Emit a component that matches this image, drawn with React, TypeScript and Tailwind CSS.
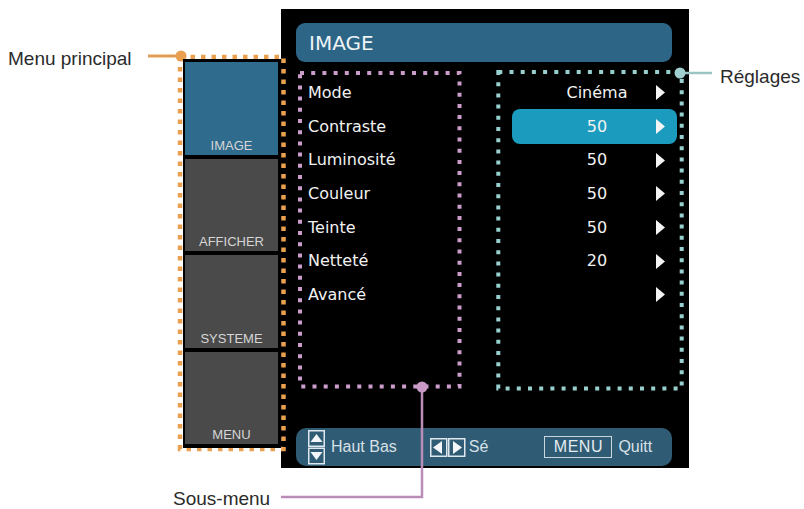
import React from 'react'

const rows = [
  { label: 'Mode', value: 'Cinéma' },
  { label: 'Contraste', value: '50', active: true },
  { label: 'Luminosité', value: '50' },
  { label: 'Couleur', value: '50' },
  { label: 'Teinte', value: '50' },
  { label: 'Netteté', value: '20' },
  { label: 'Avancé', value: '' },
]

const tiles = [
  { label: 'IMAGE', active: true },
  { label: 'AFFICHER' },
  { label: 'SYSTEME' },
  { label: 'MENU' },
]

const Arrow = () => (
  <svg width="9" height="15" viewBox="0 0 9 15" className="shrink-0">
    <polygon points="0,0 9,7.5 0,15" fill="#f4f4f4" />
  </svg>
)

const UpDownIcon = () => (
  <svg width="17" height="35" viewBox="0 0 17 35" className="shrink-0">
    <rect x="0.75" y="0.75" width="15.5" height="15.5" fill="none" stroke="#dfe8ee" strokeWidth="1.5" />
    <polygon points="2.5,12 14.5,12 8.5,4" fill="#f2f6f8" />
    <rect x="0.75" y="18.25" width="15.5" height="15.5" fill="none" stroke="#dfe8ee" strokeWidth="1.5" />
    <polygon points="2.5,22 14.5,22 8.5,30" fill="#f2f6f8" />
  </svg>
)

const LeftRightIcon = () => (
  <svg width="36" height="19" viewBox="0 0 36 19" className="shrink-0">
    <rect x="0.75" y="0.75" width="16" height="17.5" fill="none" stroke="#dfe8ee" strokeWidth="1.5" />
    <polygon points="3,9.5 12,3 12,16" fill="#f2f6f8" />
    <rect x="18.75" y="0.75" width="16" height="17.5" fill="none" stroke="#dfe8ee" strokeWidth="1.5" />
    <polygon points="32,9.5 23,3 23,16" fill="#f2f6f8" />
  </svg>
)

const Callouts = () => (
  <svg className="absolute inset-0 pointer-events-none" width="804" height="509" viewBox="0 0 804 509">
    {/* menu principal */}
    <rect x="180" y="57" width="103.5" height="392" fill="none" stroke="#eba04f" strokeWidth="4.5" strokeDasharray="4.5 6" />
    <line x1="148" y1="56" x2="181" y2="56" stroke="#df9d57" strokeWidth="3" />
    <circle cx="181" cy="56" r="5.5" fill="#e89f4f" />

    {/* sous-menu */}
    <rect x="300" y="73" width="159.5" height="313.5" fill="none" stroke="#cc9ccb" strokeWidth="4" strokeDasharray="4 7.2" />
    <polyline points="422,387 422,497 281,497" fill="none" stroke="#b98db7" strokeWidth="2.5" />
    <circle cx="422" cy="387" r="5.5" fill="#c99ac6" />

    {/* réglages */}
    <rect x="498.3" y="72" width="183.4" height="316.5" fill="none" stroke="#98cfcf" strokeWidth="4" strokeDasharray="4 7.2" />
    <line x1="680" y1="73" x2="712" y2="73" stroke="#9cc4c5" strokeWidth="2.5" />
    <circle cx="680" cy="73" r="5.5" fill="#a0d0d0" />
  </svg>
)

export default function App() {
  return (
    <div className="relative w-[804px] h-[509px] bg-white overflow-hidden font-['Liberation_Sans',Arial,sans-serif]">
      <div className="flex items-start pl-[183px] pt-[9px]">
        {/* main menu column */}
        <aside className="relative z-10 mt-[50px] w-[98px] h-[389px] bg-black pl-[2px] pr-[3px] pt-[3px] flex flex-col gap-[4px]">
          {tiles.map((t) => (
            <div
              key={t.label}
              className={`h-[92.5px] flex items-end justify-center pb-[3px] text-[13px] leading-none text-[#d6d6d6] ${
                t.active ? 'bg-[#2f6b8d]' : 'bg-[#4a4a4a]'
              }`}
            >
              {t.label}
            </div>
          ))}
        </aside>

        {/* OSD panel */}
        <div className="w-[408px] h-[459px] bg-black pl-[15px] pt-[14px] font-['DejaVu_Sans',Verdana,sans-serif]">
          <div className="w-[376px] h-[39px] rounded-[9px] bg-[#2c6586] flex items-center pl-[13px] text-[20px] text-[#eef3f6]">
            IMAGE
          </div>

          <div className="flex mt-[8px]">
            <div className="ml-[2px] w-[164px] h-[320px] pt-[6px] pl-[10px]">
              {rows.map((r) => (
                <div key={r.label} className="h-[33.7px] flex items-center text-[16px] text-[#f2f2f2]">
                  {r.label}
                </div>
              ))}
            </div>

            <div className="ml-[34px] w-[188px] h-[320px] pt-[6px]">
              {rows.map((r) => (
                <div key={r.label} className="h-[33.7px] flex items-center">
                  <div
                    className={`ml-[16px] w-[165px] flex items-center ${
                      r.active ? 'h-[35px] rounded-[8px] bg-[#1b9cbf]' : 'h-full'
                    }`}
                  >
                    <span className="ml-[37px] w-[96px] text-center text-[16px] text-[#f2f2f2]">{r.value}</span>
                    <span className="ml-[11px] flex">
                      <Arrow />
                    </span>
                  </div>
                </div>
              ))}
            </div>
          </div>

          <div className="mt-[38px] w-[376px] h-[38px] rounded-[10px] bg-[#2f5b74] flex items-center text-[16px] text-[#d7e1e7] font-['Liberation_Sans',Arial,sans-serif]">
            <span className="ml-[12px] flex">
              <UpDownIcon />
            </span>
            <span className="ml-[6px]">Haut Bas</span>
            <span className="ml-[33px] flex">
              <LeftRightIcon />
            </span>
            <span className="ml-[3px]">Sé</span>
            <span className="ml-[56px] w-[68px] h-[22px] border-[1.5px] border-[#c9d6de] flex items-center justify-center tracking-[0.5px] text-[#e4ecf0]">
              MENU
            </span>
            <span className="ml-[6px]">Quitt</span>
          </div>
        </div>
      </div>

      <Callouts />

      <span className="absolute left-[8px] top-[45px] text-[19px] text-[#2b2b2b]">Menu principal</span>
      <span className="absolute left-[720px] top-[63px] text-[19px] text-[#2b2b2b]">Réglages</span>
      <span className="absolute left-[173px] top-[485px] text-[19px] text-[#2b2b2b]">Sous-menu</span>
    </div>
  )
}
